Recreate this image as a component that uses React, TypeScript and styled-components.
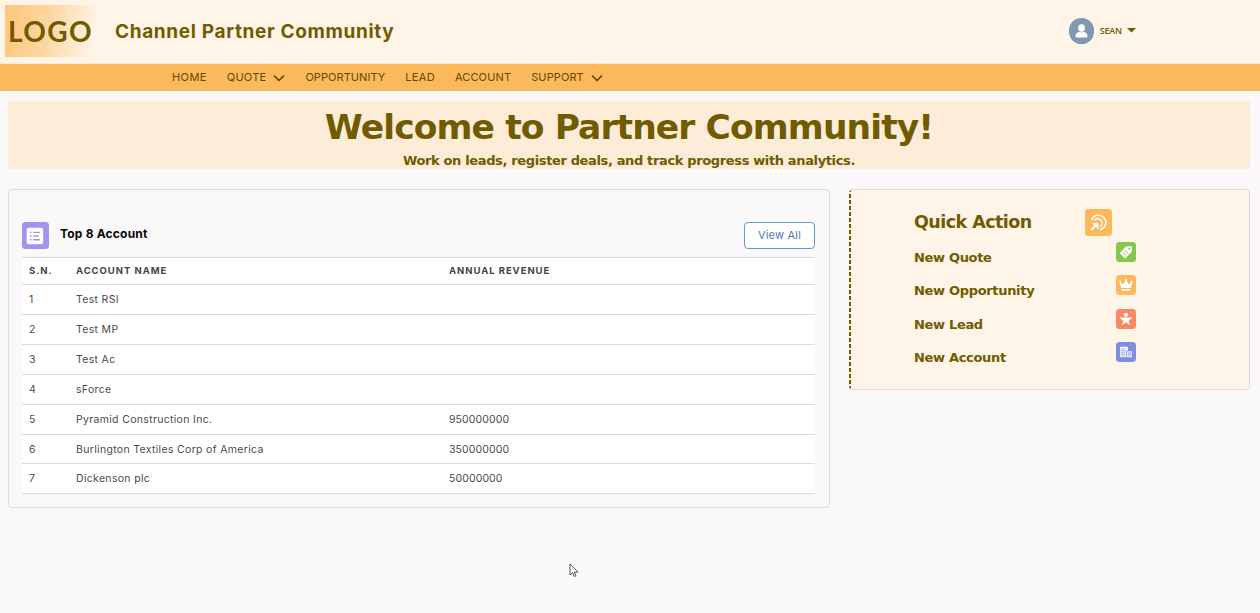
import React from "react";
import styled, { createGlobalStyle } from "styled-components";

const olive = "#705b00";
const line = "#dddbda";

const GlobalStyle = createGlobalStyle`
  * { box-sizing: border-box; }
  body { margin: 0; background: #faf8f9; font-family: Inter, "Liberation Sans", sans-serif; }
  h1, h2, p { margin: 0; }
`;

const Page = styled.div`
  height: 613px;
  overflow: hidden;
  position: relative;
`;

const Header = styled.header`
  height: 64px;
  display: flex;
  align-items: flex-start;
  padding: 5px 124px 0 5px;
  background: #fef4e7;
  border-bottom: 1px solid #f6e9da;
`;

const Logo = styled.div`
  width: 91px;
  height: 52px;
  padding-left: 3px;
  background: linear-gradient(100deg, #fcc57c 0%, #fdd69f 45%, #fef4e7 95%);
  color: ${olive};
  font: 700 28px/52px Lato, sans-serif;
  letter-spacing: 1.4px;
  white-space: nowrap;
`;

const SiteTitle = styled.h1`
  flex: 1;
  padding-left: 19px;
  color: ${olive};
  font-size: 19px;
  font-weight: 700;
  line-height: 53px;
  letter-spacing: 0.65px;
  white-space: nowrap;
`;

const User = styled.div`
  display: flex;
  align-items: center;
  height: 52px;
  color: ${olive};
  font: 600 9px "Open Sans", sans-serif;
`;

const UserName = styled.span`
  margin: 0 5px 0 6px;
  line-height: 12px;
  letter-spacing: -0.15px;
`;

const Caret = styled.svg`
  margin-top: -2px;
`;

const Nav = styled.nav`
  height: 27px;
  display: flex;
  align-items: center;
  gap: 20px;
  padding: 0 0 1px 172px;
  background: #fcb95b;
  color: #5c4a05;
  font-size: 11px;
`;

const NavItem = styled.span<{ $spacing: number }>`
  display: flex;
  align-items: center;
  gap: 7px;
  letter-spacing: ${(p) => p.$spacing}px;
  svg { margin-top: 2px; }
`;

const Banner = styled.section`
  height: 68px;
  margin: 10px 10px 0 8px;
  background: #fdecd7;
  color: ${olive};
  text-align: center;
  font-family: "DejaVu Sans", sans-serif;
  font-weight: 700;
`;

const BannerTitle = styled.h2`
  font-size: 34.5px;
  line-height: 52px;
  letter-spacing: -0.9px;
`;

const BannerText = styled.p`
  font-size: 13px;
  line-height: 15px;
  letter-spacing: -0.36px;
`;

const Columns = styled.main`
  display: grid;
  grid-template-columns: 822px 401px;
  gap: 19px;
  align-items: start;
  padding: 20px 10px 0 8px;
`;

const Card = styled.section`
  height: 319px;
  padding: 32px 14px 0 13px;
  border: 1px solid ${line};
  border-radius: 4px;
`;

const CardHeader = styled.div`
  display: flex;
  align-items: flex-start;
  height: 35px;
`;

const CardTitle = styled.h2`
  flex: 1;
  padding-left: 11px;
  color: #080707;
  font-size: 12px;
  font-weight: 700;
  line-height: 24px;
  letter-spacing: 0.2px;
`;

const ViewAll = styled.button`
  width: 71px;
  height: 27px;
  padding: 0 0 2px;
  border: 1px solid #5d9bd0;
  border-radius: 4px;
  background: #fff;
  color: #4a78b5;
  font: 400 11px Inter, sans-serif;
  letter-spacing: 0.2px;
`;

const Table = styled.div`
  background: #fff;
  border-top: 1px solid ${line};
`;

const Row = styled.div<{ $head?: boolean }>`
  display: grid;
  grid-template-columns: 47px 373px 1fr;
  height: ${(p) => (p.$head ? 27 : 29.92)}px;
  line-height: ${(p) => (p.$head ? 26 : 29.4)}px;
  padding-left: 7px;
  border-bottom: 1px solid ${line};
  color: ${(p) => (p.$head ? "#444" : "#4a4a4a")};
  font-size: ${(p) => (p.$head ? 9.5 : 10.5)}px;
  font-weight: ${(p) => (p.$head ? 700 : 400)};
  letter-spacing: ${(p) => (p.$head ? 0.95 : 0.32)}px;
`;

const Revenue = styled.span`
  letter-spacing: 0.1px;
`;

const QuickCard = styled.section`
  height: 201px;
  padding: 19px 0 0 65px;
  background:
    repeating-linear-gradient(to bottom, ${olive} 0 2px, #fef4e7 2px 4px, ${olive} 4px 6px) left top / 2px 100% no-repeat,
    #fef4e7;
  border: 1px solid ${line};
  border-left: 0;
  border-radius: 4px;
  color: ${olive};
  font-family: "DejaVu Sans", sans-serif;
`;

const QuickHeading = styled.div`
  display: flex;
  align-items: flex-start;
  justify-content: space-between;
  width: 198px;
  height: 33px;
`;

const QuickTitle = styled.h2`
  font-size: 17.5px;
  line-height: 27px;
  letter-spacing: -0.55px;
  white-space: nowrap;
`;

const QuickRow = styled.div`
  display: flex;
  align-items: flex-start;
  justify-content: space-between;
  width: 222.4px;
  height: 33.3px;
  font-size: 13px;
  font-weight: 700;
  line-height: 32px;
  letter-spacing: -0.32px;
`;

const Tile = styled.span<{ $size: number; $color: string }>`
  display: block;
  width: ${(p) => p.$size}px;
  height: ${(p) => p.$size}px;
  border-radius: 3.5px;
  background: ${(p) => p.$color};
  svg { display: block; width: 100%; height: 100%; }
`;

const Pointer = styled.svg`
  position: absolute;
  left: 569px;
  top: 563px;
`;

const Chevron = () => (
  <svg width="12" height="8" viewBox="0 0 12 8" fill="none" stroke="#5c4a05" strokeWidth="1.7" strokeLinecap="round" strokeLinejoin="round">
    <path d="M1.5 2 6 6.5 10.5 2" />
  </svg>
);

const Avatar = () => (
  <svg width="25" height="26" viewBox="0 0 25 26">
    <rect width="25" height="26" rx="12.3" fill="#8199af" />
    <ellipse cx="12.5" cy="10" rx="3.4" ry="3.8" fill="#fff" />
    <path d="M6.500 18.400v-1c0-2 2.200-3 4-3.700 1.300.8 2.700.8 4 0 1.800.7 4 1.700 4 3.700v1c0 .6-.4 1-1 1h-10c-.6 0-1-.4-1-1z" fill="#fff" />
  </svg>
);

const ListIcon = () => (
  <svg viewBox="0 0 27 27">
    <rect x="4.7" y="5.7" width="16.5" height="16.5" rx="2" fill="#fff" />
    <g stroke="#a094ed" strokeWidth="1.4" strokeLinecap="round">
      <path d="M8.300 10.400h.6M8.300 14h.6M8.300 17.700h.6M11.800 10.400h5.800M11.800 14h4.300M11.800 17.700h5.800" />
    </g>
  </svg>
);

const TargetIcon = () => (
  <svg viewBox="0 0 27 27" fill="none" stroke="#fff" strokeWidth="1.5" strokeLinecap="round">
    <path d="M6.700 10.800A7.300 7.300 0 1 1 15.600 20.500" />
    <path d="M9.700 11A4.300 4.300 0 1 1 15.700 17.200" />
    <path d="m6.600 20.500 4.500-4.500" strokeWidth="2" />
    <path d="M7.800 14.200h5.300v5.300z" fill="#fff" strokeWidth=".7" strokeLinejoin="round" />
  </svg>
);

const TagIcon = () => (
  <svg viewBox="0 0 20 20">
    <path d="M10.400 4.500 15 4.300c.5 0 .8.300.8.800l-.3 4.500c0 .3-.1.500-.3.700l-5.500 5.600c-.4.400-.9.400-1.300 0l-4.100-4.200c-.4-.4-.4-.9 0-1.300l5.400-5.600c.2-.2.400-.3.700-.3z" fill="#fff" />
    <circle cx="13.2" cy="7" r="1" fill="#84c650" />
    <path d="m7 10.400 3 3M9 8.500l3 3M7.600 12.200l.2.200M10.400 10.700l.2.200" stroke="#84c650" strokeWidth=".9" strokeLinecap="round" />
  </svg>
);

const CrownIcon = () => (
  <svg viewBox="0 0 20 20" fill="#fff">
    <path d="m4.300 7.100 2.700 2.500 2.700-4h.6l2.700 4 2.700-2.500.6.300-1.300 5.200c-.1.400-.3.500-.6.500H5.600c-.3 0-.5-.1-.6-.5L3.700 7.400z" />
    <circle cx="10" cy="5" r="1.1" /><circle cx="4.4" cy="6.7" r="1" /><circle cx="15.6" cy="6.7" r="1" />
    <rect x="5.5" y="14" width="9" height="1.7" rx=".8" />
  </svg>
);

const LeadIcon = () => (
  <svg viewBox="0 0 20 20" fill="#fff">
    <circle cx="10" cy="5.7" r="2" />
    <path d="M4.300 8.500h11.400c.5 0 .6.500.2.800L12.500 12l1.500 3.400c.2.500-.2.700-.6.400L10 13.200l-3.400 2.600c-.4.300-.8.100-.6-.4L7.500 12 4.100 9.300c-.4-.3-.3-.8.200-.8z" />
  </svg>
);

const AccountIcon = () => (
  <svg viewBox="0 0 20 20">
    <path d="M4 5.500c0-.4.300-.7.700-.7h6.600c.4 0 .7.300.7.700v3h-1.700v6.800H4.700a.7.700 0 0 1-.7-.7zM11 10c0-.4.300-.7.700-.7h3.600c.4 0 .7.300.7.700v4.600c0 .4-.3.700-.7.700H11z" fill="#f1f2ff" />
    <path d="M6 6v8.500M8.300 6v8.500M4.500 8h4M4.500 10.300h4M4.500 12.600h4M12.700 10v4.500M14.600 10v4.500M11.500 11.300h4M11.500 13.300h4" stroke="#7f8de1" strokeWidth=".45" />
  </svg>
);

const navItems = [
  { label: "HOME", spacing: 0.4 },
  { label: "QUOTE", spacing: 0.25, menu: true },
  { label: "OPPORTUNITY", spacing: 0.06 },
  { label: "LEAD", spacing: 0.3 },
  { label: "ACCOUNT", spacing: 0.15 },
  { label: "SUPPORT", spacing: 0.1, menu: true },
];

const accounts = [
  ["Test RSI", ""],
  ["Test MP", ""],
  ["Test Ac", ""],
  ["sForce", ""],
  ["Pyramid Construction Inc.", "950000000"],
  ["Burlington Textiles Corp of America", "350000000"],
  ["Dickenson plc", "50000000"],
];

const actions = [
  { label: "New Quote", color: "#84c650", icon: <TagIcon /> },
  { label: "New Opportunity", color: "#fcb95b", icon: <CrownIcon /> },
  { label: "New Lead", color: "#f88962", icon: <LeadIcon /> },
  { label: "New Account", color: "#7f8de1", icon: <AccountIcon /> },
];

export default function App() {
  return (
    <Page>
      <GlobalStyle />
      <Header>
        <Logo>LOGO</Logo>
        <SiteTitle>Channel Partner Community</SiteTitle>
        <User>
          <Avatar />
          <UserName>SEAN</UserName>
          <Caret width="9" height="5" viewBox="0 0 9 5"><path d="M0 0h9L4.500 4.600z" fill={olive} /></Caret>
        </User>
      </Header>
      <Nav>
        {navItems.map((item) => (
          <NavItem key={item.label} $spacing={item.spacing}>
            {item.label}
            {item.menu && <Chevron />}
          </NavItem>
        ))}
      </Nav>
      <Banner>
        <BannerTitle>Welcome to Partner Community!</BannerTitle>
        <BannerText>Work on leads, register deals, and track progress with analytics.</BannerText>
      </Banner>
      <Columns>
        <Card>
          <CardHeader>
            <Tile $size={27} $color="#a094ed"><ListIcon /></Tile>
            <CardTitle>Top 8 Account</CardTitle>
            <ViewAll>View All</ViewAll>
          </CardHeader>
          <Table>
            <Row $head><span>S.N.</span><span>ACCOUNT NAME</span><span>ANNUAL REVENUE</span></Row>
            {accounts.map(([name, revenue], i) => (
              <Row key={name}><span>{i + 1}</span><span>{name}</span><Revenue>{revenue}</Revenue></Row>
            ))}
          </Table>
        </Card>
        <QuickCard>
          <QuickHeading>
            <QuickTitle>Quick Action</QuickTitle>
            <Tile $size={27} $color="#fcb95b"><TargetIcon /></Tile>
          </QuickHeading>
          {actions.map((a) => (
            <QuickRow key={a.label}>
              {a.label}
              <Tile $size={20} $color={a.color}>{a.icon}</Tile>
            </QuickRow>
          ))}
        </QuickCard>
      </Columns>
      <Pointer width="10" height="15" viewBox="0 0 10 15">
        <path d="M1 1v11l2.600-2.400L5.300 13.500l1.600-.7-1.600-3.700H9z" fill="#fff" stroke="#444" strokeWidth=".9" />
      </Pointer>
    </Page>
  );
}
